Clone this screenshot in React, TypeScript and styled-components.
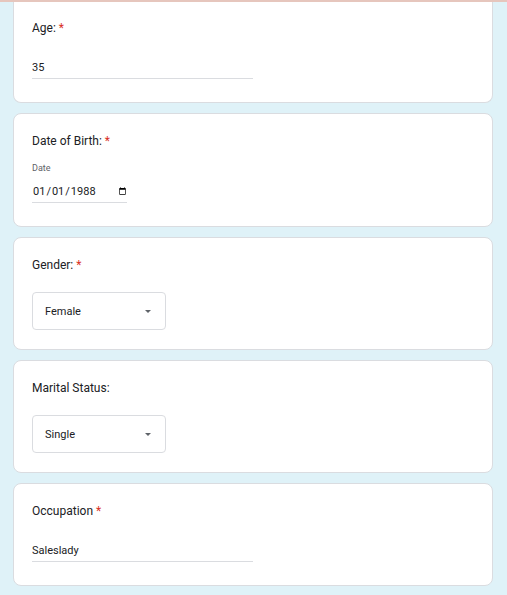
import React from "react";
import styled, { createGlobalStyle } from "styled-components";

const GlobalStyle = createGlobalStyle`
	html, body {
		margin: 0;
		padding: 0;
		background: #dff2f8;
		font-family: Roboto, "Noto Sans", Arial, sans-serif;
		color: #202124;
	}
`;

const TopEdge = styled.div`
	position: fixed;
	top: 0;
	left: 0;
	right: 0;
	height: 2px;
	background: #e6c6bd;
	z-index: 2;
`;

const Page = styled.main`
	display: flex;
	flex-direction: column;
	gap: 10px;
	width: 480px;
	margin-left: 13px;
	padding-bottom: 20px;
`;

const Card = styled.section<{ $clipped?: boolean }>`
	display: flex;
	flex-direction: column;
	background: #fff;
	border: 1px solid #dadce0;
	border-radius: 8px;
	padding: 19px 18px 19px;
	${(p) =>
		p.$clipped &&
		`
		border-top: none;
		border-top-left-radius: 0;
		border-top-right-radius: 0;
		padding-top: 20px;
	`}
`;

const Label = styled.div`
	font-size: 12px;
	line-height: 16px;
	color: #202124;
	span {
		color: #d93025;
		margin-left: 3px;
	}
`;

const TextInput = styled.input`
	box-sizing: border-box;
	width: 221px;
	height: 23px;
	margin: 20px 0 4px;
	padding: 0;
	border: none;
	border-bottom: 1px solid #dadce0;
	font-family: Roboto, sans-serif;
	font-size: 11px;
	color: #202124;
	background: transparent;
	outline: none;
`;

const SubLabel = styled.div`
	margin-top: 13px;
	font-size: 9px;
	line-height: 12px;
	color: #5f6368;
`;

const DateInput = styled.input`
	box-sizing: border-box;
	width: 95px;
	height: 23px;
	margin: 6px 0 4px;
	padding: 0;
	border: none;
	border-bottom: 1px solid #dadce0;
	font-family: Roboto, sans-serif;
	font-size: 11px;
	color: #202124;
	background: transparent;
	outline: none;
	&::-webkit-calendar-picker-indicator {
		margin: 0;
		padding: 0;
		width: 9px;
		height: 9px;
	}
`;

const Select = styled.div`
	box-sizing: border-box;
	display: flex;
	align-items: center;
	justify-content: space-between;
	width: 134px;
	height: 38px;
	margin-top: 19px;
	padding: 0 14px 0 12px;
	border: 1px solid #dadce0;
	border-radius: 4px;
	font-size: 11px;
	color: #202124;
`;

const Caret = () => (
	<svg width="6" height="3" viewBox="0 0 6 3">
		<path d="M0 0h6L3 3z" fill="#5f6368" />
	</svg>
);

export default function App() {
	return (
		<>
			<GlobalStyle />
			<TopEdge />
			<Page>
				<Card $clipped>
					<Label>
						Age:<span>*</span>
					</Label>
					<TextInput defaultValue="35" />
				</Card>
				<Card>
					<Label>
						Date of Birth:<span>*</span>
					</Label>
					<SubLabel>Date</SubLabel>
					<DateInput type="date" defaultValue="1988-01-01" />
				</Card>
				<Card>
					<Label>
						Gender:<span>*</span>
					</Label>
					<Select>
						Female
						<Caret />
					</Select>
				</Card>
				<Card>
					<Label>Marital Status:</Label>
					<Select>
						Single
						<Caret />
					</Select>
				</Card>
				<Card>
					<Label>
						Occupation<span>*</span>
					</Label>
					<TextInput defaultValue="Saleslady" />
				</Card>
			</Page>
		</>
	);
}
